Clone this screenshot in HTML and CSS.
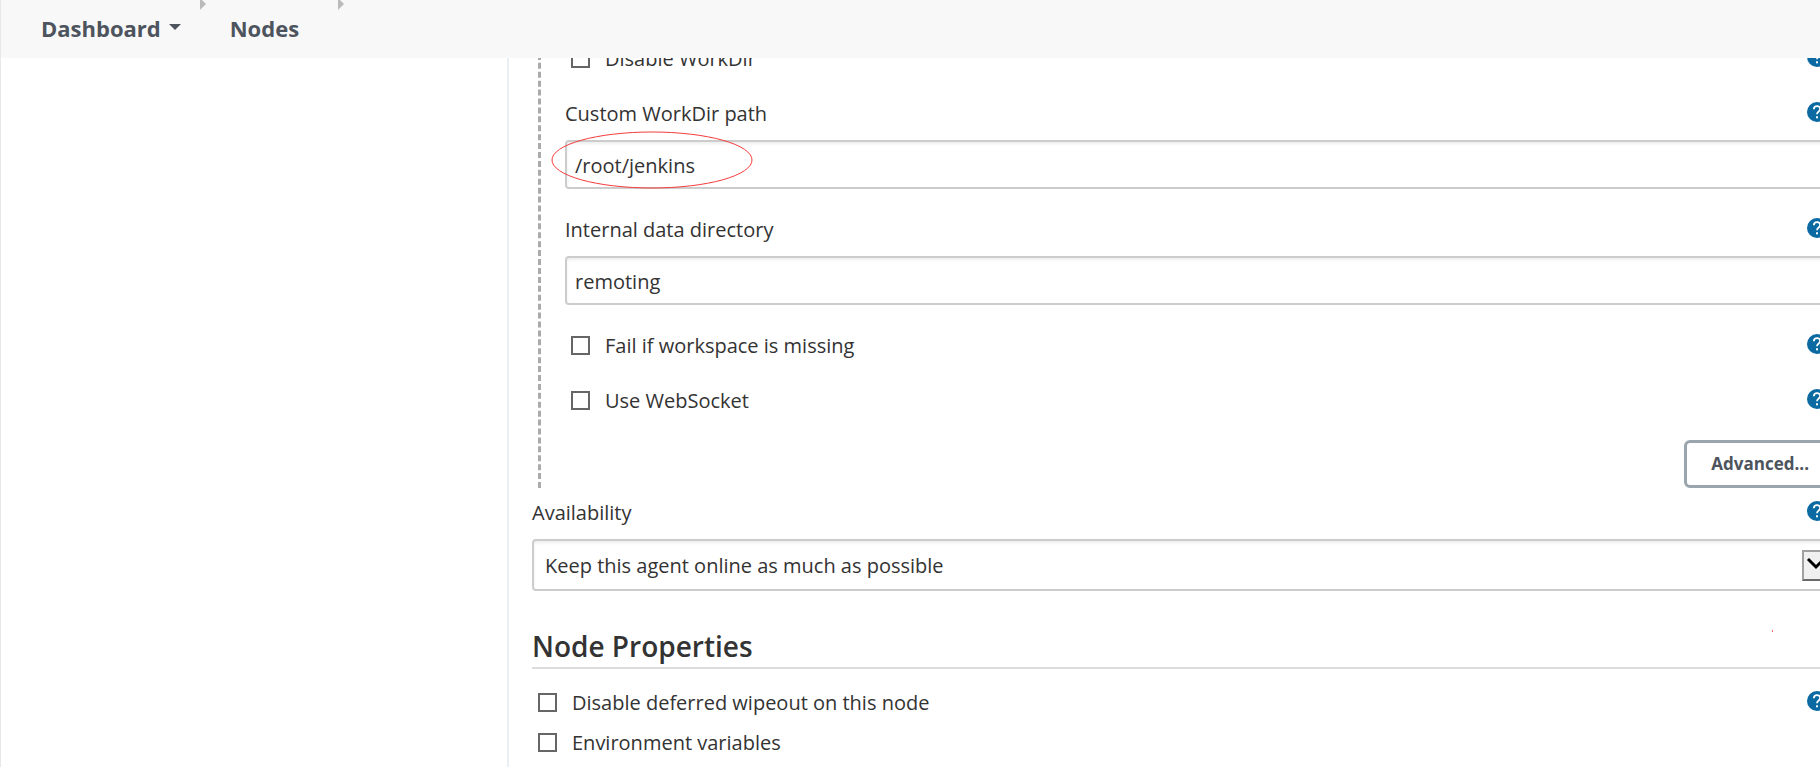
FILE: index.html
```html
<!DOCTYPE html>
<html lang="en">
<head>
  <meta charset="UTF-8" />
  <meta name="viewport" content="width=device-width, initial-scale=1.0" />
  <title>Nodes</title>
  <link rel="stylesheet" href="styles.css">
</head>
<body>
  <!-- help icon, reused by every row -->
  <svg class="defs" width="0" height="0" aria-hidden="true">
    <symbol id="help-icon" viewBox="0 0 20 20">
      <circle cx="10" cy="10" r="10" fill="#0b6aa2"/>
      <path d="M6.8 7.3C6.9 5.3 8.2 4.2 10 4.2s3.2 1.1 3.2 2.8c0 2.4-3.2 2.6-3.2 5.2" fill="none" stroke="#fff" stroke-width="1.8"/>
      <rect x="9" y="14.3" width="2" height="2" fill="#fff"/>
    </symbol>
  </svg>

  <nav class="breadcrumbs" aria-label="Breadcrumb">
    <a class="crumb" href="#">Dashboard
      <svg class="caret" width="12" height="6" viewBox="0 0 12 6"><path d="M0 0h12L6 6z" fill="#4d545d"/></svg>
    </a>
    <svg class="separator" width="6" height="10" viewBox="0 0 6 10"><path d="M0 0v10l6-6-4-4z" fill="#bbb"/></svg>
    <a class="crumb" href="#">Nodes</a>
    <svg class="separator last" width="6" height="10" viewBox="0 0 6 10"><path d="M0 0v10l6-6-4-4z" fill="#bbb"/></svg>
  </nav>

  <div class="page">
    <aside class="side-panel"></aside>
    <main class="main-panel">
      <form class="config">
        <div class="nested">
          <div class="row check">
            <input type="checkbox" id="disable-workdir">
            <label for="disable-workdir">Disable WorkDir</label>
            <a class="help" href="#" aria-label="Help"><svg width="20" height="20"><use href="#help-icon"/></svg></a>
          </div>
          <div class="field">
            <div class="row">
              <label for="workdir">Custom WorkDir path</label>
              <a class="help" href="#" aria-label="Help"><svg width="20" height="20"><use href="#help-icon"/></svg></a>
            </div>
            <div class="control">
              <input class="text" type="text" id="workdir" value="/root/jenkins">
              <svg class="marker" width="202" height="58" viewBox="0 0 202 58"><ellipse cx="101" cy="29" rx="100" ry="28" fill="none" stroke="#f53b3b"/></svg>
            </div>
          </div>
          <div class="field">
            <div class="row">
              <label for="datadir">Internal data directory</label>
              <a class="help" href="#" aria-label="Help"><svg width="20" height="20"><use href="#help-icon"/></svg></a>
            </div>
            <div class="control">
              <input class="text" type="text" id="datadir" value="remoting">
            </div>
          </div>
          <div class="row check">
            <input type="checkbox" id="fail-missing">
            <label for="fail-missing">Fail if workspace is missing</label>
            <a class="help" href="#" aria-label="Help"><svg width="20" height="20"><use href="#help-icon"/></svg></a>
          </div>
          <div class="row check">
            <input type="checkbox" id="websocket">
            <label for="websocket">Use WebSocket</label>
            <a class="help" href="#" aria-label="Help"><svg width="20" height="20"><use href="#help-icon"/></svg></a>
          </div>
          <button class="advanced" type="button">Advanced...</button>
        </div>

        <div class="field availability">
          <div class="row">
            <label for="availability">Availability</label>
            <a class="help" href="#" aria-label="Help"><svg width="20" height="20"><use href="#help-icon"/></svg></a>
          </div>
          <div class="control">
            <select id="availability">
              <option>Keep this agent online as much as possible</option>
            </select>
            <svg class="arrow" width="30" height="31" viewBox="0 0 30 31">
              <rect width="30" height="31" fill="#a0a0a0"/>
              <path d="M0 31l2-2h26V2l2-2v31z" fill="#696969"/>
              <rect x="2" y="2" width="26" height="27" fill="#f0f0f0"/>
              <path d="M6 9l8 8 8-8" fill="none" stroke="#000" stroke-width="3"/>
            </svg>
          </div>
        </div>

        <h2>Node Properties<span class="speck"></span></h2>
        <div class="properties">
          <div class="row check">
            <input type="checkbox" id="wipeout">
            <label for="wipeout">Disable deferred wipeout on this node</label>
            <a class="help" href="#" aria-label="Help"><svg width="20" height="20"><use href="#help-icon"/></svg></a>
          </div>
          <div class="row check">
            <input type="checkbox" id="env-vars">
            <label for="env-vars">Environment variables</label>
          </div>
        </div>
      </form>
    </main>
  </div>
</body>
</html>
```

FILE: styles.css
```css
* {
  box-sizing: border-box;
}
body {
  margin: 0;
  height: 100vh;
  display: flex;
  flex-direction: column;
  overflow: hidden;
  border-left: 1px solid #e8e8e8;
  font-family: "Segoe UI", "Open Sans", "Noto Sans", sans-serif;
  font-size: 20px;
  line-height: 28px;
  color: #333;
  background: #fff;
}
.defs {
  position: absolute;
}

/* Breadcrumb bar */
.breadcrumbs {
  position: relative;
  z-index: 1;
  display: flex;
  flex-shrink: 0;
  height: 58px;
  padding-left: 40px;
  background: #f8f8f8;
}
.crumb {
  display: flex;
  align-items: center;
  gap: 8px;
  padding-bottom: 2px;
  color: #4d545d;
  font-size: 22px;
  font-weight: 700;
  text-decoration: none;
}
.caret {
  margin-bottom: 2px;
}
.separator {
  margin: 0 24px 0 19px;
}
.separator.last {
  margin-left: 39px;
}

/* Page columns */
.page {
  flex: 1;
  display: flex;
  min-height: 0;
}
.side-panel {
  flex: 0 0 508px;
  border-right: 2px solid #e9eff3;
}
.main-panel {
  flex: 1;
  min-width: 0;
  padding-left: 23px;
}
/* the form is scrolled under the bar and runs past the right edge */
.config {
  margin: -13px -16px 0 0;
}

.nested {
  display: flex;
  flex-direction: column;
  gap: 27px;
  margin-left: 6px;
  padding-left: 24px;
  border-left: 3px dashed #aaa;
}
.row {
  display: flex;
  align-items: center;
}
.check {
  padding-left: 6px;
}
.help {
  display: flex;
  margin: 0 9px 4px auto;
}
input[type="checkbox"] {
  appearance: none;
  width: 19px;
  height: 19px;
  margin: 0 15px 1px 0;
  border: 2px solid #666;
  background: #fff;
}
.control {
  position: relative;
  margin-top: 12px;
}
.text,
select {
  display: block;
  width: 100%;
  border: 2px solid #ccc;
  border-radius: 4px;
  background: #fff;
  box-shadow: inset 0 2px 3px #eee;
  color: #333;
  font: inherit;
}
.text {
  height: 49px;
  padding: 2px 8px 0;
}
select {
  appearance: none;
  height: 52px;
  padding: 2px 11px 0;
}
.marker {
  position: absolute;
  top: -9px;
  left: -14px;
  pointer-events: none;
}
.arrow {
  position: absolute;
  top: 11px;
  right: 4px;
  pointer-events: none;
}
.advanced {
  align-self: flex-end;
  height: 48px;
  margin-top: -2px;
  padding: 0 24px;
  border: 3px solid #9aa5ad;
  border-radius: 6px;
  background: #fff;
  color: #4d545d;
  font: inherit;
  font-size: 17px;
  font-weight: 700;
}
.availability {
  margin-top: 11px;
}

h2 {
  position: relative;
  margin: 36px 0 20px;
  padding-bottom: 2px;
  border-bottom: 2px solid #ddd;
  font-size: 28px;
  font-weight: 600;
  line-height: 38px;
}
.speck {
  position: absolute;
  top: 3px;
  right: 63px;
  width: 1px;
  height: 2px;
  background: #f56c6c;
}
.properties {
  display: flex;
  flex-direction: column;
  gap: 12px;
}
```
